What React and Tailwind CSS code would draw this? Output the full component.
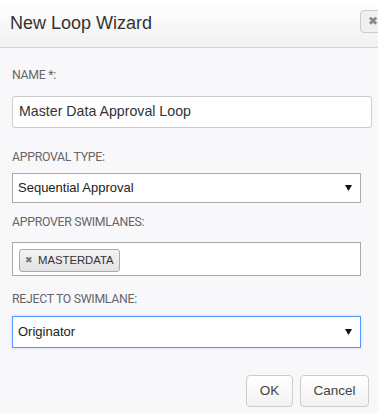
import React from 'react';

const labelCls = "block text-[12.3px] leading-4 text-[#666] uppercase font-['Roboto',sans-serif] tracking-[-0.3px]";

function Caret() {
  return (
    <svg width="7" height="6" viewBox="0 0 7 6" className="shrink-0">
      <path d="M0 0h7L3.5 6z" fill="#111" />
    </svg>
  );
}

export default function App() {
  return (
    <div className="w-[378px] h-[413px] overflow-hidden bg-[#f8f8fa] font-['Liberation_Sans',Arial,sans-serif] text-[#333]">
      {/* Header */}
      <div className="h-[48px] flex items-center pl-[10px] border-b border-[#d2d2d2] bg-gradient-to-b from-white to-[#f1f1f1]">
        <h1 className="text-[18px] text-[#333] font-normal">New Loop Wizard</h1>
        <button className="ml-auto mr-[-7px] mt-[-5px] w-[25px] h-[23px] rounded-[4px] border border-[#ccc] bg-[#f0f0f0] flex items-center justify-center text-[#888] text-[12px] leading-none">
          ✖
        </button>
      </div>

      {/* Body */}
      <div className="pl-[12px] pt-[19px]">
        <label className={labelCls}>Name *:</label>
        <div className="mt-[13px] w-[360px] h-[32px] bg-white border border-[#ccc] rounded-[3px] flex items-center px-[6px] text-[14.2px]">
          Master Data Approval Loop
        </div>

        <label className={labelCls + " mt-[21px]"}>Approval Type:</label>
        <div className="mt-[8px] w-[349px] h-[30px] bg-white border border-[#aaa] flex items-center pl-[5px] pr-[8px] text-[13px] text-[#222]">
          <span>Sequential Approval</span>
          <span className="ml-auto"><Caret /></span>
        </div>

        <label className={labelCls + " mt-[11px]"}>Approver Swimlanes:</label>
        <div className="mt-[12px] w-[349px] h-[34px] bg-white border border-[#aaa] pl-[6px] pt-[3px]">
          <span className="inline-flex items-center h-[23px] px-[5px] gap-[5px] rounded-[3px] border border-[#aaa] bg-gradient-to-b from-[#f4f4f4] to-[#e2e2e2] text-[11.3px] text-[#333]">
            <span className="text-[9px] text-[#777] leading-none">✖</span>
            MASTERDATA
          </span>
        </div>

        <label className={labelCls + " mt-[15px]"}>Reject to Swimlane:</label>
        <div className="mt-[9px] w-[349px] h-[32px] bg-white border border-[#5897fb] flex items-center pl-[5px] pr-[8px] text-[13px] text-[#222] shadow-[0_0_3px_rgba(88,151,251,0.3)]">
          <span>Originator</span>
          <span className="ml-auto"><Caret /></span>
        </div>

        <div className="mt-[27px] flex justify-end gap-[7px] pr-[9px]">
          <button className="w-[47px] h-[32px] rounded-[4px] border border-[#ccc] bg-gradient-to-b from-white to-[#f2f2f2] text-[13.5px] text-[#444]">OK</button>
          <button className="w-[69px] h-[32px] rounded-[4px] border border-[#ccc] bg-gradient-to-b from-white to-[#f2f2f2] text-[13.5px] text-[#444]">Cancel</button>
        </div>
      </div>
    </div>
  );
}
